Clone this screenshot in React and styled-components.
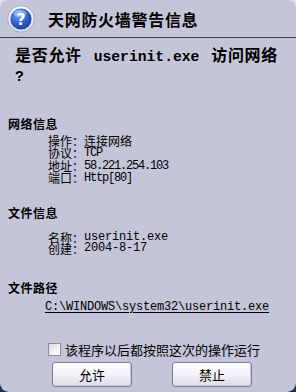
import React from "react";
import styled, { createGlobalStyle } from "styled-components";

const Global = createGlobalStyle`
  html, body {
    margin: 0;
    padding: 0;
    width: 296px;
    height: 392px;
    overflow: hidden;
    background: linear-gradient(#e4e4ec 0 50%, #1b3154 50% 100%);
  }
  #root { width: 296px; height: 392px; }
`;

const CJK = `"Noto Sans CJK SC", "Noto Sans", sans-serif`;
const MONO = `"Liberation Mono", "Noto Sans CJK SC", monospace`;

const Window = styled.div`
  width: 296px;
  height: 392px;
  box-sizing: border-box;
  background: #c5c5da;
  border-radius: 7px 7px 9px 9px;
  display: flex;
  flex-direction: column;
  font-family: ${CJK};
  color: #000;
  overflow: hidden;
`;

const Header = styled.div`
  height: 37px;
  border-bottom: 1px solid #3a3a48;
  display: flex;
  align-items: center;
  padding-left: 7px;
  gap: 13px;
  flex-shrink: 0;
`;

const Title = styled.div`
  font-size: 16px;
  line-height: 16px;
  font-weight: 700;
  letter-spacing: 0.7px;
`;

const Question = styled.div`
  margin-top: 8px;
  padding-left: 15px;
  font-size: 16px;
  line-height: 17px;
  font-weight: 700;
  letter-spacing: 0.7px;
`;

const QMono = styled.span`
  font-family: ${MONO};
  font-size: 14.7px;
  letter-spacing: 0;
  padding: 0 ${(p) => (p.$bare ? 0 : 3)}px;
  white-space: pre;
`;

const Heading = styled.div`
  margin-top: ${(p) => p.$top}px;
  padding-left: 8px;
  font-size: 12px;
  line-height: 12px;
  font-weight: 700;
  letter-spacing: 0.5px;
`;

const Rows = styled.div`
  margin-top: ${(p) => p.$top}px;
  padding-left: 48px;
  display: flex;
  flex-direction: column;
`;

const Row = styled.div`
  font-size: 12px;
  line-height: ${(p) => p.$lh}px;
  height: ${(p) => p.$lh}px;
  white-space: nowrap;
  display: flex;
`;

const Label = styled.span`
  font-family: ${CJK};
`;

const Value = styled.span`
  font-family: ${MONO};
  font-size: 12px;
  letter-spacing: ${(p) => p.$ls}px;
`;

const Path = styled.div`
  margin-top: 7px;
  padding-left: 45px;
  font-family: ${MONO};
  font-size: 12px;
  line-height: 12px;
  letter-spacing: -0.2px;
  text-decoration: underline;
  text-underline-offset: 2px;
`;

const CheckRow = styled.label`
  margin-top: 30px;
  padding-left: 48px;
  display: flex;
  align-items: center;
  gap: 4px;
  font-size: 13px;
  line-height: 14px;
`;

const Box = styled.span`
  width: 11px;
  height: 11px;
  border: 1px solid #8c8ca4;
  background: linear-gradient(135deg, #d4d4de 0%, #f4f4f8 60%, #ffffff 100%);
  flex-shrink: 0;
`;

const Buttons = styled.div`
  margin-top: 5px;
  padding-left: 52px;
  display: flex;
  gap: 40px;
`;

const Button = styled.button`
  width: 80px;
  height: 25px;
  box-sizing: border-box;
  border: 1px solid #7c7c9a;
  border-radius: 3px;
  background: linear-gradient(#ffffff 0%, #f2f2f7 50%, #dcdce8 100%);
  font-family: ${CJK};
  font-size: 13px;
  line-height: 13px;
  color: #000;
  padding: 0;
  box-shadow: inset -1px -1px 0 #c8c8d8;
`;

const HelpIcon = () => (
  <svg width="28" height="28" viewBox="0 0 28 28">
    <defs>
      <radialGradient id="hb" cx="40%" cy="30%" r="75%">
        <stop offset="0%" stopColor="#7aa6f4" />
        <stop offset="55%" stopColor="#2f62cc" />
        <stop offset="100%" stopColor="#173d9c" />
      </radialGradient>
      <linearGradient id="hr" x1="0" y1="0" x2="0" y2="1">
        <stop offset="0%" stopColor="#ffffff" />
        <stop offset="100%" stopColor="#d8d8e4" />
      </linearGradient>
    </defs>
    <circle cx="14" cy="14" r="13.3" fill="url(#hr)" stroke="#9c9cb4" strokeWidth="0.8" />
    <circle cx="14" cy="14" r="10.6" fill="url(#hb)" />
    <ellipse cx="13" cy="8.5" rx="6.5" ry="3.4" fill="#ffffff" opacity="0.35" />
    <text
      x="14"
      y="19.6"
      textAnchor="middle"
      fontFamily='"DejaVu Sans", sans-serif'
      fontWeight="700"
      fontSize="15"
      fill="#ffffff"
    >
      ?
    </text>
  </svg>
);

const netRows = [
  ["操作", "", "连接网络"],
  ["协议", "TCP"],
  ["地址", "58.221.254.103"],
  ["端口", "Http[80]"],
];

const fileRows = [
  ["名称", "userinit.exe"],
  ["创建", "2004-8-17"],
];

export default function App() {
  return (
    <>
      <Global />
      <Window>
        <Header>
          <HelpIcon />
          <Title>天网防火墙警告信息</Title>
        </Header>
        <Question>
          是否允许<QMono> userinit.exe </QMono>访问网络
          <br />
          <QMono $bare>?</QMono>
        </Question>

        <Heading $top={32}>网络信息</Heading>
        <Rows $top={5}>
          {netRows.map(([k, v, cjk]) => (
            <Row key={k} $lh={12.4}>
              <Label>{k}：</Label>
              {cjk ? <Label>{cjk}</Label> : <Value $ls={-1.2}>{v}</Value>}
            </Row>
          ))}
        </Rows>

        <Heading $top={22}>文件信息</Heading>
        <Rows $top={13}>
          {fileRows.map(([k, v]) => (
            <Row key={k} $lh={11.7}>
              <Label>{k}：</Label>
              <Value $ls={-0.2}>{v}</Value>
            </Row>
          ))}
        </Rows>

        <Heading $top={27}>文件路径</Heading>
        <Path>C:\WINDOWS\system32\userinit.exe</Path>

        <CheckRow>
          <Box />
          该程序以后都按照这次的操作运行
        </CheckRow>

        <Buttons>
          <Button>允许</Button>
          <Button>禁止</Button>
        </Buttons>
      </Window>
    </>
  );
}
